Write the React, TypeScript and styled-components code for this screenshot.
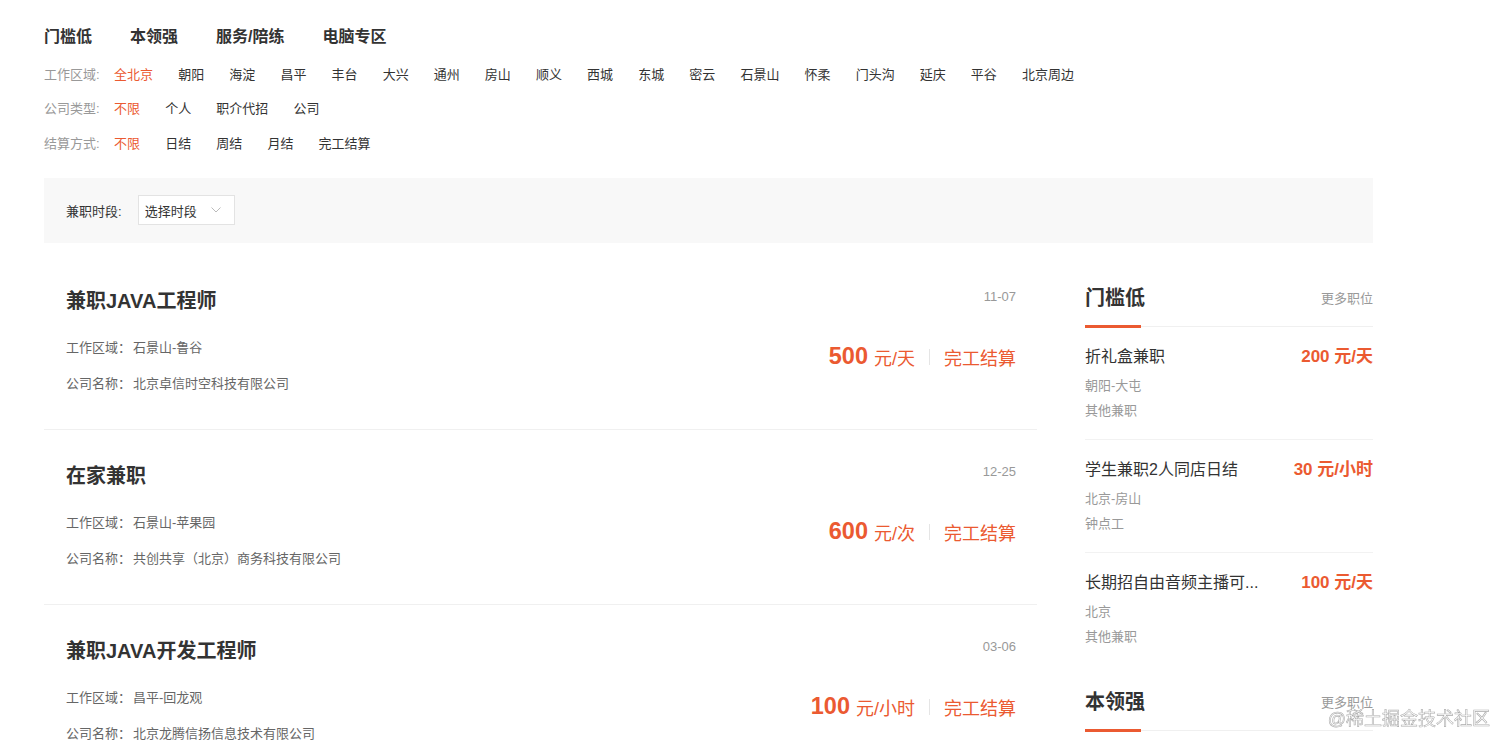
import styled, { createGlobalStyle } from "styled-components";

const ORANGE = "#eb5a31";

const tabs = ["门槛低", "本领强", "服务/陪练", "电脑专区"];

const filters = [
  {
    label: "工作区域:",
    items: [
      "全北京", "朝阳", "海淀", "昌平", "丰台", "大兴", "通州", "房山", "顺义",
      "西城", "东城", "密云", "石景山", "怀柔", "门头沟", "延庆", "平谷", "北京周边",
    ],
  },
  { label: "公司类型:", items: ["不限", "个人", "职介代招", "公司"] },
  { label: "结算方式:", items: ["不限", "日结", "周结", "月结", "完工结算"] },
];

const jobs = [
  {
    title: "兼职JAVA工程师",
    date: "11-07",
    area: "石景山-鲁谷",
    company: "北京卓信时空科技有限公司",
    price: "500",
    unit: "元/天",
    settle: "完工结算",
  },
  {
    title: "在家兼职",
    date: "12-25",
    area: "石景山-苹果园",
    company: "共创共享（北京）商务科技有限公司",
    price: "600",
    unit: "元/次",
    settle: "完工结算",
  },
  {
    title: "兼职JAVA开发工程师",
    date: "03-06",
    area: "昌平-回龙观",
    company: "北京龙腾信扬信息技术有限公司",
    price: "100",
    unit: "元/小时",
    settle: "完工结算",
  },
];

const sections = [
  {
    title: "门槛低",
    items: [
      { name: "折礼盒兼职", price: "200 元/天", place: "朝阳-大屯", kind: "其他兼职" },
      { name: "学生兼职2人同店日结", price: "30 元/小时", place: "北京-房山", kind: "钟点工" },
      { name: "长期招自由音频主播可...", price: "100 元/天", place: "北京", kind: "其他兼职" },
    ],
  },
  {
    title: "本领强",
    items: [
      { name: "兼职Python讲师", price: "300 元/天", place: "海淀-中关村", kind: "家教" },
      { name: "平面设计兼职", price: "150 元/天", place: "朝阳-望京", kind: "设计" },
    ],
  },
];

export default function App() {
  return (
    <Page>
      <GlobalStyle />
      <Tabs>
        {tabs.map((t) => (
          <Tab key={t}>{t}</Tab>
        ))}
      </Tabs>

      <Filters>
        {filters.map((f) => (
          <FilterRow key={f.label}>
            <FilterLabel>{f.label}</FilterLabel>
            {f.items.map((item, i) => (
              <FilterItem key={item} $active={i === 0}>
                {item}
              </FilterItem>
            ))}
          </FilterRow>
        ))}
      </Filters>

      <TimeBar>
        <TimeLabel>兼职时段:</TimeLabel>
        <Select>
          <span>选择时段</span>
          <svg width="10" height="6" viewBox="0 0 10 6" fill="none">
            <path d="M0.5 0.5 L5 5 L9.5 0.5" stroke="#bbb" strokeWidth="1" />
          </svg>
        </Select>
      </TimeBar>

      <Columns>
        <JobList>
          {jobs.map((job) => (
            <JobCard key={job.title}>
              <JobInfo>
                <JobTitle>{job.title}</JobTitle>
                <JobMeta $first>
                  工作区域：<MetaValue>{job.area}</MetaValue>
                </JobMeta>
                <JobMeta>
                  公司名称：<MetaValue>{job.company}</MetaValue>
                </JobMeta>
              </JobInfo>
              <JobSide>
                <JobDate>{job.date}</JobDate>
                <PriceRow>
                  <PriceNum>{job.price}</PriceNum>
                  <PriceUnit>{job.unit}</PriceUnit>
                  <PriceSep />
                  <Settle>{job.settle}</Settle>
                </PriceRow>
              </JobSide>
            </JobCard>
          ))}
        </JobList>

        <Sidebar>
          {sections.map((s) => (
            <Section key={s.title}>
              <SectionHead>
                <SectionTitle>{s.title}</SectionTitle>
                <More>更多职位</More>
              </SectionHead>
              {s.items.map((it, i) => (
                <SideItem key={it.name} $last={i === s.items.length - 1}>
                  <SideTop>
                    <SideName>{it.name}</SideName>
                    <SidePrice>{it.price}</SidePrice>
                  </SideTop>
                  <SideSub $gap={9}>{it.place}</SideSub>
                  <SideSub $gap={5}>{it.kind}</SideSub>
                </SideItem>
              ))}
            </Section>
          ))}
        </Sidebar>
      </Columns>

      <Watermark>@稀土掘金技术社区</Watermark>
    </Page>
  );
}

const GlobalStyle = createGlobalStyle`
  body {
    margin: 0;
    background: #fff;
    font-family: "Liberation Sans", "Noto Sans CJK SC", sans-serif;
    color: #333;
  }
`;

const Page = styled.div`
  width: 1329px;
  padding: 25px 0 40px 44px;
`;

const Tabs = styled.div`
  display: flex;
  gap: 38px;
`;

const Tab = styled.div`
  font-size: 16px;
  line-height: 24px;
  font-weight: 700;
  color: #333;
`;

const Filters = styled.div`
  margin-top: 7px;
`;

const FilterRow = styled.div`
  display: flex;
  align-items: center;
  height: 34.5px;
  gap: 25.1px;
  font-size: 13px;
`;

const FilterLabel = styled.div`
  width: 45px;
  color: #999;
  white-space: nowrap;
`;

const FilterItem = styled.div<{ $active?: boolean }>`
  color: ${(p) => (p.$active ? ORANGE : "#333")};
  white-space: nowrap;
`;

const TimeBar = styled.div`
  margin-top: 18px;
  height: 65px;
  background: #f8f8f8;
  display: flex;
  align-items: center;
  padding: 0 22px;
  gap: 16px;
`;

const TimeLabel = styled.div`
  font-size: 13px;
  color: #333;
`;

const Select = styled.div`
  box-sizing: border-box;
  width: 97px;
  height: 30px;
  background: #fff;
  border: 1px solid #e3e3e3;
  display: flex;
  align-items: center;
  justify-content: space-between;
  padding: 0 13px 0 6px;
  font-size: 13px;
  color: #333;
`;

const Columns = styled.div`
  margin-top: 12px;
  display: flex;
  gap: 48px;
  align-items: flex-start;
`;

const JobList = styled.div`
  width: 993px;
`;

const JobCard = styled.div`
  display: flex;
  justify-content: space-between;
  padding: 32px 21px 35px 22px;
  border-bottom: 1px solid #f0f0f0;
`;

const JobInfo = styled.div`
  display: flex;
  flex-direction: column;
`;

const JobTitle = styled.div`
  font-size: 20px;
  line-height: 28px;
  font-weight: 700;
  color: #333;
`;

const JobMeta = styled.div<{ $first?: boolean }>`
  margin-top: ${(p) => (p.$first ? 23 : 16)}px;
  font-size: 13px;
  line-height: 20px;
  color: #666;
`;

const MetaValue = styled.span`
  margin-left: 2px;
`;

const JobSide = styled.div`
  display: flex;
  flex-direction: column;
  align-items: flex-end;
`;

const JobDate = styled.div`
  font-size: 13px;
  line-height: 20px;
  color: #999;
`;

const PriceRow = styled.div`
  margin-top: 35px;
  display: flex;
  align-items: center;
  height: 30px;
  color: ${ORANGE};
`;

const PriceNum = styled.span`
  font-size: 23.5px;
  font-weight: 700;
`;

const PriceUnit = styled.span`
  font-size: 18px;
  margin-left: 6px;
`;

const PriceSep = styled.span`
  width: 1px;
  height: 16px;
  background: #e5e5e5;
  margin: 0 14px;
`;

const Settle = styled.span`
  font-size: 18px;
`;

const Sidebar = styled.div`
  width: 288px;
  padding-top: 29px;
`;

const Section = styled.div`
  margin-bottom: 23px;
`;

const SectionHead = styled.div`
  position: relative;
  display: flex;
  justify-content: space-between;
  align-items: center;
  padding-bottom: 14px;
  border-bottom: 1px solid #f0f0f0;

  &::after {
    content: "";
    position: absolute;
    left: 0;
    bottom: -2px;
    width: 56px;
    height: 3px;
    background: ${ORANGE};
  }
`;

const SectionTitle = styled.div`
  font-size: 20px;
  line-height: 28px;
  font-weight: 700;
  color: #333;
`;

const More = styled.div`
  font-size: 13px;
  color: #999;
`;

const SideItem = styled.div<{ $last?: boolean }>`
  padding: 20px 0 18px;
  border-bottom: ${(p) => (p.$last ? "none" : "1px solid #f2f2f2")};
`;

const SideTop = styled.div`
  display: flex;
  justify-content: space-between;
  align-items: center;
  line-height: 20px;
`;

const SideName = styled.div`
  font-size: 16px;
  color: #333;
  white-space: nowrap;
`;

const SidePrice = styled.div`
  font-size: 17px;
  font-weight: 700;
  color: ${ORANGE};
`;

const SideSub = styled.div<{ $gap: number }>`
  margin-top: ${(p) => p.$gap}px;
  font-size: 13px;
  line-height: 20px;
  color: #999;
`;

const Watermark = styled.div`
  position: fixed;
  right: 22px;
  bottom: 20px;
  font-size: 18px;
  color: rgba(255, 255, 255, 0.85);
  -webkit-text-stroke: 0.6px rgba(0, 0, 0, 0.35);
  pointer-events: none;
`;
